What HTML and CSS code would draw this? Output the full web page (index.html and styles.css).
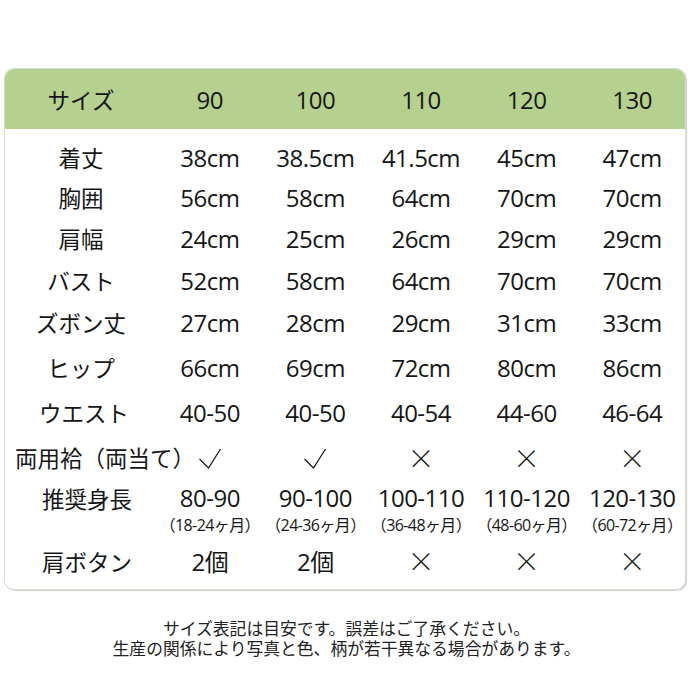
FILE: index.html
```html
<!DOCTYPE html>
<html lang="ja">
<head>
<meta charset="utf-8">
<link rel="stylesheet" href="styles.css">
</head>
<body>
<div class="card">
  <div class="row head">
    <div class="label">サイズ</div><div>90</div><div>100</div><div>110</div><div>120</div><div>130</div>
  </div>
  <div class="body">
    <div class="row h40"><div class="label">着丈</div><div>38cm</div><div>38.5cm</div><div>41.5cm</div><div>45cm</div><div>47cm</div></div>
    <div class="row h40"><div class="label">胸囲</div><div>56cm</div><div>58cm</div><div>64cm</div><div>70cm</div><div>70cm</div></div>
    <div class="row h42"><div class="label">肩幅</div><div>24cm</div><div>25cm</div><div>26cm</div><div>29cm</div><div>29cm</div></div>
    <div class="row h42"><div class="label">バスト</div><div>52cm</div><div>58cm</div><div>64cm</div><div>70cm</div><div>70cm</div></div>
    <div class="row h42"><div class="label">ズボン丈</div><div>27cm</div><div>28cm</div><div>29cm</div><div>31cm</div><div>33cm</div></div>
    <div class="row h48"><div class="label">ヒップ</div><div>66cm</div><div>69cm</div><div>72cm</div><div>80cm</div><div>86cm</div></div>
    <div class="row h42"><div class="label shift-s">ウエスト</div><div>40-50</div><div>40-50</div><div>40-54</div><div>44-60</div><div>46-64</div></div>
    <div class="row h48">
      <div class="label wide">両用袷（両当て）</div>
      <div><svg class="check" width="24" height="21" viewBox="0 0 24 21"><polyline points="1.5,11 10.5,20 22.5,1" fill="none" stroke="#1c1c1c" stroke-width="1.3"/></svg></div>
      <div><svg class="check" width="24" height="21" viewBox="0 0 24 21"><polyline points="1.5,11 10.5,20 22.5,1" fill="none" stroke="#1c1c1c" stroke-width="1.3"/></svg></div>
      <div class="mark">×</div><div class="mark">×</div><div class="mark">×</div>
    </div>
    <div class="row h60 top">
      <div class="label shift">推奨身長</div>
      <div class="stack"><span class="main">80-90</span><span class="sub">（18-24ヶ月）</span></div>
      <div class="stack"><span class="main">90-100</span><span class="sub">（24-36ヶ月）</span></div>
      <div class="stack"><span class="main">100-110</span><span class="sub">（36-48ヶ月）</span></div>
      <div class="stack"><span class="main">110-120</span><span class="sub">（48-60ヶ月）</span></div>
      <div class="stack"><span class="main">120-130</span><span class="sub">（60-72ヶ月）</span></div>
    </div>
    <div class="row h36"><div class="label shift">肩ボタン</div><div>2個</div><div>2個</div><div class="mark">×</div><div class="mark">×</div><div class="mark">×</div></div>
  </div>
</div>
<div class="note">
  <p>サイズ表記は目安です。誤差はご了承ください。</p>
  <p>生産の関係により写真と色、柄が若干異なる場合があります。</p>
</div>
</body>
</html>
```
FILE: styles.css
```css
html, body {
  margin: 0;
  padding: 0;
  background: #ffffff;
}
body {
  font-family: "Open Sans", "Noto Sans CJK JP", sans-serif;
  color: #161616;
}
.card {
  margin: 68px 0 0 4px;
  width: 680px;
  border: 1.5px solid #d6ddcd;
  border-radius: 10px;
  overflow: hidden;
  box-shadow: 1px 1px 1px rgba(120, 130, 120, 0.35);
  background: #fff;
}
.row {
  display: grid;
  grid-template-columns: 152px repeat(5, 1fr);
  align-items: center;
  text-align: center;
  font-size: 24px;
  letter-spacing: -0.5px;
  white-space: nowrap;
}
.head {
  height: 60px;
  background: #b6d18f;
}
.label {
  font-family: "Noto Sans CJK JP", sans-serif;
  font-size: 22.5px;
  letter-spacing: 0;
}
.shift { padding-left: 12px; }
.shift-s { padding-left: 6px; }
.wide {
  text-align: left;
  padding-left: 10px;
}
.body {
  padding: 8px 0 12px;
}
.h36 { height: 36px; }
.h40 { height: 40px; }
.h42 { height: 42px; }
.h48 { height: 48px; }
.h60 { height: 60px; }
.top { align-items: start; }
.top .label { line-height: 34px; }
.stack {
  display: flex;
  flex-direction: column;
  align-items: center;
}
.main {
  line-height: 34px;
}
.sub {
  font-size: 16px;
  line-height: 20px;
  letter-spacing: -0.6px;
}
.mark {
  font-family: "Noto Sans CJK JP", sans-serif;
  font-size: 27px;
  font-weight: 300;
  letter-spacing: 0;
}
.check {
  display: block;
  margin: 2px auto 0;
}
.note {
  margin-top: 30px;
  text-align: center;
  font-family: "Liberation Sans", "Noto Sans CJK JP", sans-serif;
  font-size: 16.8px;
  line-height: 19.5px;
  color: #222;
}
.note p {
  margin: 0;
}
```
